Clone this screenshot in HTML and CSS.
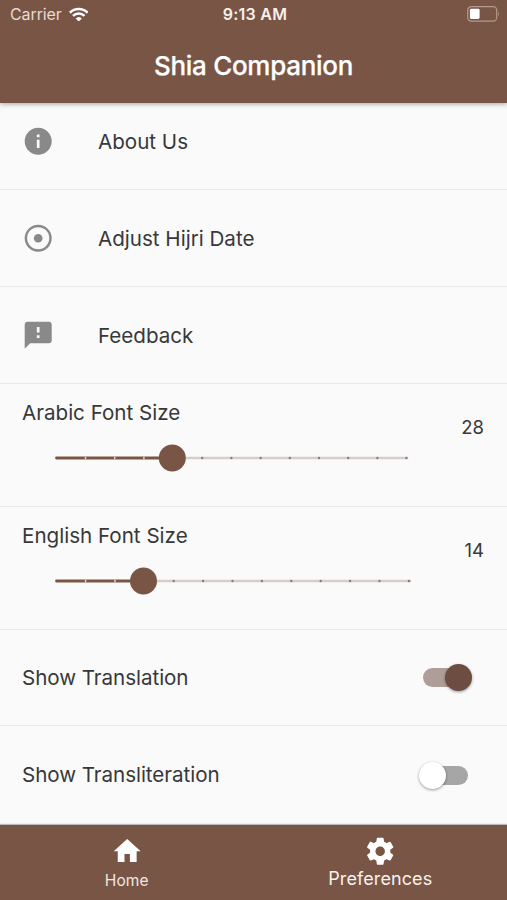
FILE: index.html
```html
<!DOCTYPE html>
<html lang="en">
<head>
<meta charset="utf-8">
<title>Shia Companion</title>
<link rel="stylesheet" href="styles.css">
</head>
<body>
<div class="app">
  <header class="header">
    <div class="status">
      <div class="carrier"><span>Carrier</span>
        <svg class="wifi" viewBox="0 0 20 15"><g fill="none" stroke="currentColor" stroke-width="2.6"><path d="M.9 5.9a12.9 12.9 0 0 1 18.2 0"/><path d="M4.1 9.1a8.4 8.4 0 0 1 11.8 0"/></g><path d="M10 15l-3.2-3.3a4.6 4.6 0 0 1 6.4 0z" fill="currentColor"/></svg>
      </div>
      <time class="time">9:13 AM</time>
      <svg class="battery" viewBox="0 0 33 16"><rect x=".7" y=".7" width="29" height="14.4" rx="3.6" fill="none" stroke="#b39a8f" stroke-width="1.2"/><rect x="2.9" y="2.8" width="9.7" height="10.2" rx="1.4" fill="#fff"/><path d="M31.2 5.2q1.6 2.7 0 5.4z" fill="#b39a8f"/></svg>
    </div>
    <h1 class="title">Shia Companion</h1>
  </header>
  <main class="list">
    <div class="row row-first">
      <svg class="icon" viewBox="0 0 24 24"><path d="M12 2a10 10 0 1 0 0 20 10 10 0 0 0 0-20zm1 15h-2v-6h2v6zm0-8h-2V7h2v2z"/></svg>
      <span class="label">About Us</span>
    </div>
    <div class="row">
      <svg class="icon" viewBox="0 0 24 24"><circle cx="12" cy="12" r="9.1" fill="none" stroke="currentColor" stroke-width="1.8"/><circle cx="12" cy="12" r="3.2"/></svg>
      <span class="label">Adjust Hijri Date</span>
    </div>
    <div class="row">
      <svg class="icon" viewBox="0 0 24 24"><path d="M20 2H4c-1.1 0-2 .9-2 2v18l4-4h14c1.1 0 2-.9 2-2V4c0-1.1-.9-2-2-2zm-7 12h-2v-2h2v2zm0-4h-2V6h2v4z"/></svg>
      <span class="label">Feedback</span>
    </div>
    <div class="row slider-row">
      <div class="slider-main">
        <span class="label">Arabic Font Size</span>
        <svg class="slider" width="380" height="30" viewBox="0 0 380 30">
          <path class="track" d="M150 15H385"/><path class="active" d="M34.5 15H150"/>
          <path class="ticks-on" d="M63.5 13.5v3M92.7 13.5v3M121.9 13.5v3"/>
          <path class="ticks" d="M180.2 15h.01M209.4 15h.01M238.6 15h.01M267.8 15h.01M297 15h.01M326.2 15h.01M355.4 15h.01M384.4 15h.01"/>
          <circle class="thumb" cx="150.3" cy="15" r="13.5"/>
        </svg>
      </div>
      <span class="value">28</span>
    </div>
    <div class="row slider-row">
      <div class="slider-main">
        <span class="label">English Font Size</span>
        <svg class="slider" width="380" height="30" viewBox="0 0 380 30">
          <path class="track" d="M121 15H388"/><path class="active" d="M34.5 15H121"/>
          <path class="ticks-on" d="M63.6 13.5v3M93 13.5v3"/>
          <path class="ticks" d="M151.7 15h.01M181.1 15h.01M210.5 15h.01M239.9 15h.01M269.3 15h.01M298.7 15h.01M328.1 15h.01M357.5 15h.01M386.9 15h.01"/>
          <circle class="thumb" cx="121.5" cy="15" r="13.5"/>
        </svg>
      </div>
      <span class="value">14</span>
    </div>
    <div class="row switch-row">
      <span class="label">Show Translation</span>
      <span class="switch on"><span class="knob"></span></span>
    </div>
    <div class="row switch-row last">
      <span class="label">Show Transliteration</span>
      <span class="switch"><span class="knob"></span></span>
    </div>
  </main>
  <nav class="nav">
    <a class="tab">
      <svg class="nav-icon" viewBox="0 0 24 24"><path d="M10 20v-6h4v6h5v-8h3L12 3 2 12h3v8z"/></svg>
      <span class="tab-home">Home</span>
    </a>
    <a class="tab">
      <svg class="nav-icon" viewBox="0 0 24 24"><path d="M19.43 12.98c.04-.32.07-.64.07-.98s-.03-.66-.07-.98l2.11-1.65c.19-.15.24-.42.12-.64l-2-3.46c-.12-.22-.39-.3-.61-.22l-2.49 1c-.52-.4-1.08-.73-1.69-.98l-.38-2.65C14.46 2.18 14.25 2 14 2h-4c-.25 0-.46.18-.49.42l-.38 2.65c-.61.25-1.17.59-1.69.98l-2.49-1c-.23-.09-.49 0-.61.22l-2 3.46c-.13.22-.07.49.12.64l2.11 1.65c-.04.32-.07.65-.07.98s.03.66.07.98l-2.11 1.65c-.19.15-.24.42-.12.64l2 3.46c.12.22.39.3.61.22l2.49-1c.52.4 1.08.73 1.69.98l.38 2.65c.03.24.24.42.49.42h4c.25 0 .46-.18.49-.42l.38-2.65c.61-.25 1.17-.59 1.69-.98l2.49 1c.23.09.49 0 .61-.22l2-3.46c.12-.22.07-.49-.12-.64l-2.11-1.65zM12 15.5c-1.93 0-3.5-1.57-3.5-3.5s1.57-3.5 3.5-3.5 3.5 1.57 3.5 3.5-1.57 3.5-3.5 3.5z"/></svg>
      <span class="tab-prefs">Preferences</span>
    </a>
  </nav>
</div>
</body>
</html>
```
FILE: styles.css
```css
* { box-sizing: border-box; }
body { margin: 0; font-family: Inter, "Liberation Sans", sans-serif; color: #383838; background: #fafafa; }
.app { width: 507px; height: 900px; display: flex; flex-direction: column; overflow: hidden; }
.header { height: 103px; flex: none; background: #795546; color: #fff; box-shadow: 0 1px 5px rgba(0,0,0,.35); z-index: 1; }
.status { height: 28px; display: grid; grid-template-columns: 1fr auto 1fr; align-items: center; padding: 0 7px 0 10px; }
.carrier { display: flex; align-items: center; gap: 7px; font-size: 16px; letter-spacing: -.1px; color: #e9d9d2; }
.wifi { width: 19.5px; height: 14.6px; color: #fff; }
.time { font-size: 16px; font-weight: 600; letter-spacing: .25px; color: #f8efeb; }
.battery { width: 33px; height: 16px; justify-self: end; }
.title { margin: 0; height: 76px; line-height: 76px; text-align: center; font-size: 26px; font-weight: 500; letter-spacing: -.3px; -webkit-text-stroke: .25px #fff; }
.list { flex: 1; }
.row { height: 97px; display: flex; align-items: center; padding: 0 22px; border-bottom: 1px solid #e9e9e9; }
.row-first { height: 87px; padding-bottom: 10px; }
.icon { width: 32.4px; height: 32.4px; margin-right: 43.6px; fill: #898989; color: #898989; }
.label { font-size: 20.6px; line-height: 28px; letter-spacing: 0; white-space: nowrap; }
.row > .icon + .label { padding-top: 1px; }
.slider-row { height: 123px; align-items: flex-start; justify-content: space-between; padding-top: 15px; }
.slider-main { display: flex; flex-direction: column; gap: 16px; }
.slider { overflow: visible; display: block; }
.slider path { fill: none; stroke-linecap: round; }
.track { stroke: #d8cdc9; stroke-width: 2.6; }
.active { stroke: #795546; stroke-width: 2.8; }
.slider .ticks-on { stroke: #d8cdc9; stroke-width: 1.5; stroke-linecap: butt; }
.ticks { stroke: #8f7b73; stroke-width: 2.4; }
.thumb { fill: #795546; }
.value { font-size: 18.5px; line-height: 28px; margin: 14px 1px 0 0; }
.switch-row { height: 96px; justify-content: space-between; padding-right: 39px; }
.switch-row .label { letter-spacing: -.05px; }
.switch { width: 45px; height: 19px; border-radius: 10px; background: #a6a6a6; display: flex; align-items: center; }
.knob { width: 27px; height: 27px; flex: none; border-radius: 50%; background: #fff; margin-left: -4px; box-shadow: 0 1px 3px rgba(0,0,0,.4); }
.on { background: #af9e97; justify-content: flex-end; }
.on .knob { background: #6d4c41; margin: 0 -4px 0 0; }
.last { height: 98px; border-bottom: 0; }
.nav { height: 75px; flex: none; display: flex; background: #795546; color: #fff; box-shadow: 0 -1px 1px rgba(0,0,0,.25); }
.tab { flex: 1; display: flex; flex-direction: column; align-items: center; padding-top: 10px; }
.nav-icon { width: 32.4px; height: 32.4px; fill: #fff; }
.tab-home { font-size: 15.5px; line-height: 20px; margin-top: 4px; color: #f3e6e0; letter-spacing: .1px; }
.tab-prefs { font-size: 18px; line-height: 22px; margin-top: 1px; color: #faf1ed; letter-spacing: .1px; }
```
